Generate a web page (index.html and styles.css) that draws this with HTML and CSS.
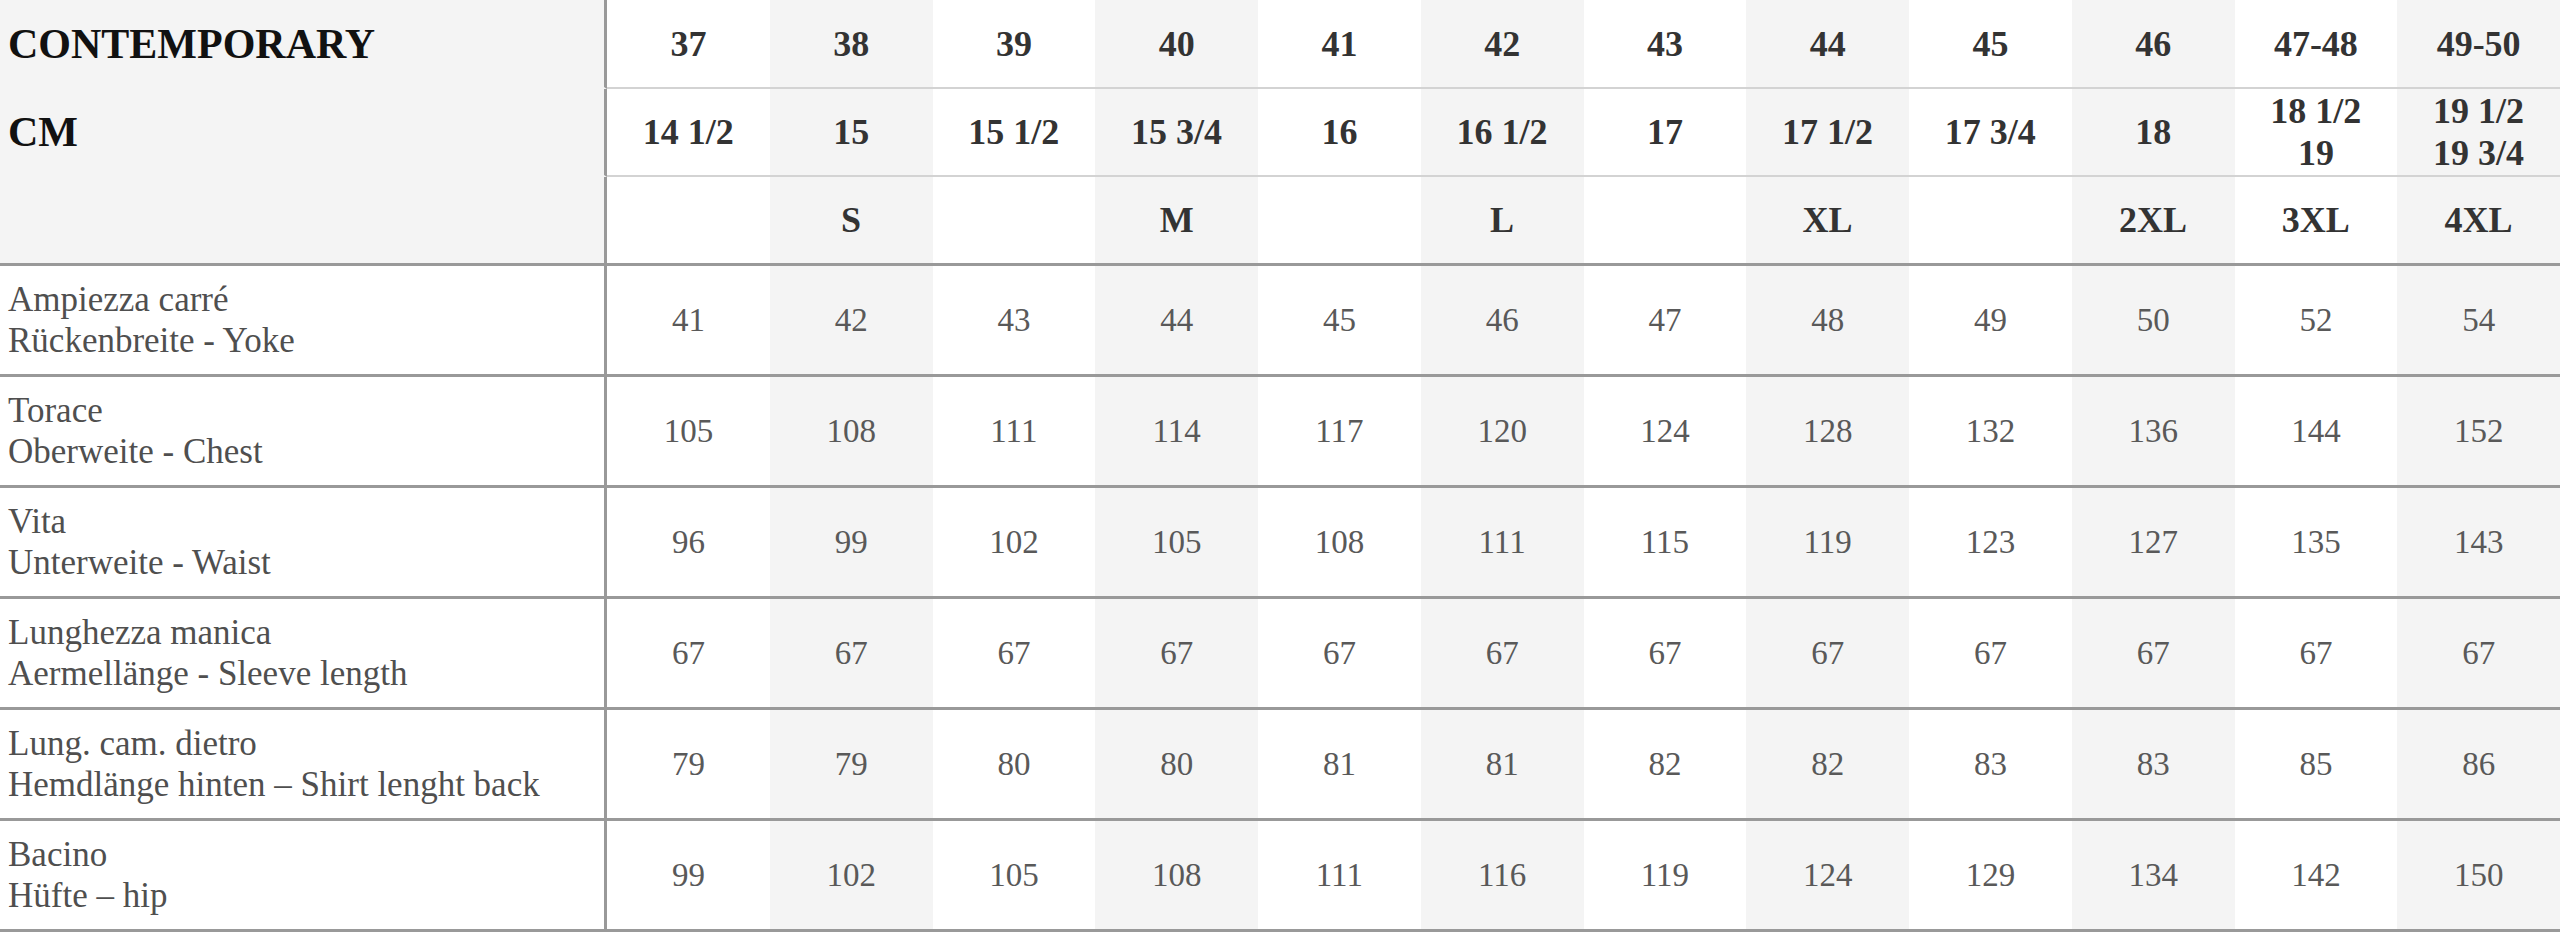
FILE: index.html
```html
<!DOCTYPE html>
<html lang="it">
<head>
<meta charset="utf-8">
<title>Contemporary – size chart</title>
<link rel="stylesheet" href="styles.css">
</head>
<body>
<table class="chart">
  <colgroup>
    <col class="c-label">
    <col><col class="alt"><col><col class="alt"><col><col class="alt">
    <col><col class="alt"><col><col class="alt"><col><col class="alt">
  </colgroup>
  <thead>
    <tr class="h1">
      <th class="title">CONTEMPORARY</th>
      <th>37</th><th>38</th><th>39</th><th>40</th><th>41</th><th>42</th>
      <th>43</th><th>44</th><th>45</th><th>46</th><th>47-48</th><th>49-50</th>
    </tr>
    <tr class="h2">
      <th class="title">CM</th>
      <th>14 1/2</th><th>15</th><th>15 1/2</th><th>15 3/4</th><th>16</th><th>16 1/2</th>
      <th>17</th><th>17 1/2</th><th>17 3/4</th><th>18</th><th>18 1/2<br>19</th><th>19 1/2<br>19 3/4</th>
    </tr>
    <tr class="h3">
      <th class="title"></th>
      <th></th><th>S</th><th></th><th>M</th><th></th><th>L</th>
      <th></th><th>XL</th><th></th><th>2XL</th><th>3XL</th><th>4XL</th>
    </tr>
  </thead>
  <tbody>
    <tr>
      <td class="label">Ampiezza carré<br>Rückenbreite - Yoke</td>
      <td>41</td><td>42</td><td>43</td><td>44</td><td>45</td><td>46</td>
      <td>47</td><td>48</td><td>49</td><td>50</td><td>52</td><td>54</td>
    </tr>
    <tr>
      <td class="label">Torace<br>Oberweite - Chest</td>
      <td>105</td><td>108</td><td>111</td><td>114</td><td>117</td><td>120</td>
      <td>124</td><td>128</td><td>132</td><td>136</td><td>144</td><td>152</td>
    </tr>
    <tr>
      <td class="label">Vita<br>Unterweite - Waist</td>
      <td>96</td><td>99</td><td>102</td><td>105</td><td>108</td><td>111</td>
      <td>115</td><td>119</td><td>123</td><td>127</td><td>135</td><td>143</td>
    </tr>
    <tr>
      <td class="label">Lunghezza manica<br>Aermellänge - Sleeve length</td>
      <td>67</td><td>67</td><td>67</td><td>67</td><td>67</td><td>67</td>
      <td>67</td><td>67</td><td>67</td><td>67</td><td>67</td><td>67</td>
    </tr>
    <tr>
      <td class="label">Lung. cam. dietro<br>Hemdlänge hinten – Shirt lenght back</td>
      <td>79</td><td>79</td><td>80</td><td>80</td><td>81</td><td>81</td>
      <td>82</td><td>82</td><td>83</td><td>83</td><td>85</td><td>86</td>
    </tr>
    <tr>
      <td class="label">Bacino<br>Hüfte – hip</td>
      <td>99</td><td>102</td><td>105</td><td>108</td><td>111</td><td>116</td>
      <td>119</td><td>124</td><td>129</td><td>134</td><td>142</td><td>150</td>
    </tr>
  </tbody>
</table>
</body>
</html>
```
FILE: styles.css
```css
html, body {
  margin: 0;
  padding: 0;
  background: #ffffff;
}

.chart {
  width: 2560px;
  table-layout: fixed;
  border-collapse: separate;
  border-spacing: 0;
  font-family: "Liberation Serif", "DejaVu Serif", serif;
}

.c-label {
  width: 607px;
}

.alt {
  background: #f4f4f4;
}

.chart th,
.chart td {
  padding: 0;
  text-align: center;
  vertical-align: middle;
}

/* header */
.chart thead th {
  font-weight: bold;
  font-size: 36px;
  line-height: 42px;
  color: #333333;
}

.chart thead .h1 { height: 89px; }
.chart thead .h2 { height: 88px; }
.chart thead .h3 { height: 89px; }

.chart thead .h1 th,
.chart thead .h2 th {
  border-bottom: 2px solid #d3d3d3;
}

.chart thead .h3 th {
  border-bottom: 3px solid #999999;
}

.chart thead th.title {
  background: #f4f4f4;
  text-align: left;
  padding-left: 8px;
  font-size: 42px;
  color: #111111;
  border-right: 3px solid #999999;
}

.chart thead .h1 th.title,
.chart thead .h2 th.title {
  border-bottom: 2px solid #f4f4f4;
}

/* body */
.chart tbody tr {
  height: 111px;
}

.chart tbody td {
  font-size: 33px;
  line-height: 41px;
  color: #595959;
  border-bottom: 3px solid #999999;
}

.chart tbody td.label {
  text-align: left;
  padding-left: 8px;
  font-size: 35px;
  color: #4f4f4f;
  background: #ffffff;
  border-right: 3px solid #999999;
}
```
